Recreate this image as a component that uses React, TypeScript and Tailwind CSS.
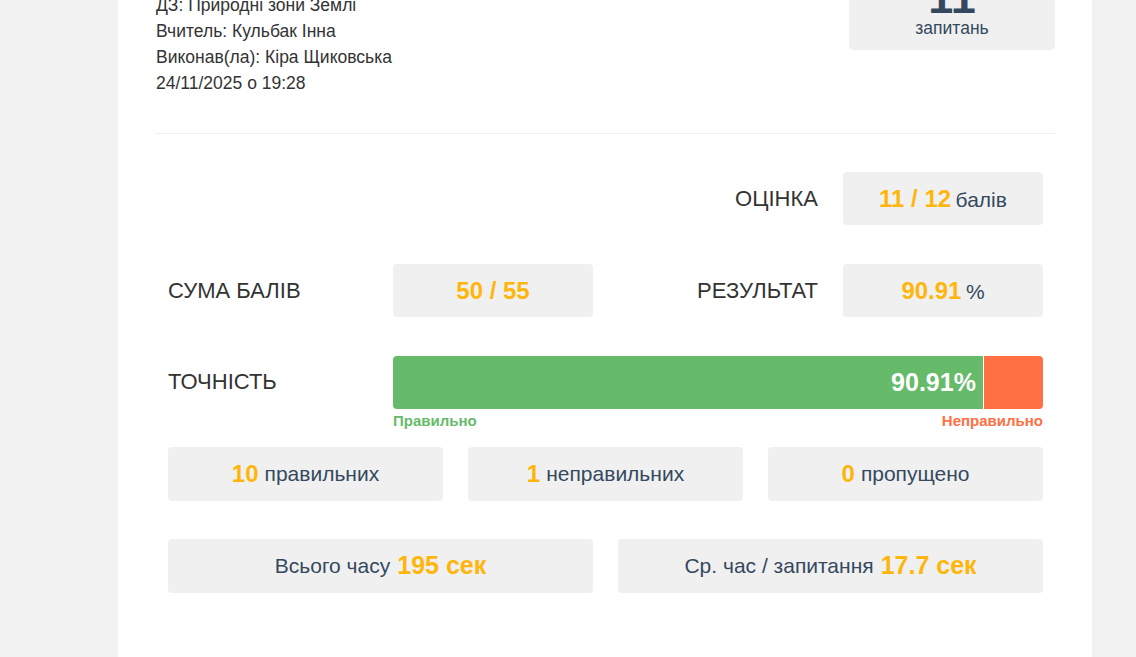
export default function App() {
  const correct = 90.91;
  const orange = "text-[#ffb60c]";

  return (
    <div className="h-[657px] overflow-hidden bg-[#f2f2f2] font-['Liberation_Sans',Arial,sans-serif]">
      <div className="ml-[118px] h-full w-[974px] bg-white pl-[38px] pr-[37px]">
        {/* Header */}
        <div className="flex items-start justify-between border-b border-[#eeeeee] pb-[37px]">
          <div className="-mt-[8px] text-[17.5px] leading-[26px] text-[#333]">
            <div>ДЗ: Природні зони Землі</div>
            <div>Вчитель: Кульбак Інна</div>
            <div>Виконав(ла): Кіра Щиковська</div>
            <div>24/11/2025 о 19:28</div>
          </div>
          <div className="-mt-[25px] flex w-[206px] flex-col items-center rounded-[5px] bg-[#f0f0f0] pb-[11px]">
            <div className="h-[42px] text-[45px] font-bold leading-[45px] text-[#34495e]">11</div>
            <div className="text-[17.5px] leading-[22px] text-[#34495e]">запитань</div>
          </div>
        </div>

        <div className="px-[12px] pt-[38px]">
          {/* Grade */}
          <div className="grid grid-cols-[225px_200px_250px_200px] items-center">
            <div />
            <div />
            <div className="pr-[25px] text-right text-[22px] text-[#333]">ОЦІНКА</div>
            <StatBox>
              <span className={`font-bold ${orange} text-[24px]`}>11 / 12</span>{" "}
              <span className="text-[21px] text-[#34495e]">балів</span>
            </StatBox>
          </div>

          <div className="mt-[39px] grid grid-cols-[225px_200px_250px_200px] items-center">
            <div className="text-[22px] text-[#333]">СУМА БАЛІВ</div>
            <StatBox>
              <span className={`font-bold ${orange} text-[24px]`}>50 / 55</span>
            </StatBox>
            <div className="pr-[25px] text-right text-[22px] text-[#333]">РЕЗУЛЬТАТ</div>
            <StatBox>
              <span className={`font-bold ${orange} text-[24px]`}>90.91</span>{" "}
              <span className="text-[21px] text-[#34495e]">%</span>
            </StatBox>
          </div>

          {/* Accuracy */}
          <div className="mt-[39px] grid grid-cols-[225px_650px]">
            <div className="pt-[9px] text-[22px] text-[#333]">ТОЧНІСТЬ</div>
            <div>
              <div className="flex h-[53px] overflow-hidden rounded-[4px]">
                <div
                  className="flex items-center justify-end border-r border-white bg-[#66bb6a] pr-[7px] text-[25px] font-bold text-white"
                  style={{ width: `${correct}%` }}
                >
                  90.91%
                </div>
                <div className="flex-1 bg-[#ff7043]" />
              </div>
              <div className="mt-[3px] flex justify-between text-[15px] font-bold leading-[17px]">
                <span className="text-[#66bb6a]">Правильно</span>
                <span className="text-[#ff7043]">Неправильно</span>
              </div>
            </div>
          </div>

          <div className="mt-[18px] grid grid-cols-[275px_275px_275px] gap-[25px]">
            <CountBox n="10" label="правильних" />
            <CountBox n="1" label="неправильних" />
            <CountBox n="0" label="пропущено" />
          </div>

          <div className="mt-[38px] grid grid-cols-[425px_425px] gap-[25px]">
            <TimeBox label="Всього часу" value="195 сек" />
            <TimeBox label="Ср. час / запитання" value="17.7 сек" />
          </div>
        </div>
      </div>
    </div>
  );
}

function StatBox({ children }: { children: React.ReactNode }) {
  return (
    <div className="flex h-[53px] items-center justify-center rounded-[4px] bg-[#f0f0f0]">
      <div>{children}</div>
    </div>
  );
}

function CountBox({ n, label }: { n: string; label: string }) {
  return (
    <div className="flex h-[54px] items-center justify-center rounded-[4px] bg-[#f0f0f0]">
      <span className="text-[24px] font-bold text-[#ffb60c]">{n}</span>
      <span className="ml-[6px] text-[21px] text-[#34495e]">{label}</span>
    </div>
  );
}

function TimeBox({ label, value }: { label: string; value: string }) {
  return (
    <div className="flex h-[54px] items-center justify-center rounded-[4px] bg-[#f0f0f0]">
      <span className="text-[21px] text-[#34495e]">{label}</span>
      <span className="ml-[7px] text-[25px] font-bold text-[#ffb60c]">{value}</span>
    </div>
  );
}
